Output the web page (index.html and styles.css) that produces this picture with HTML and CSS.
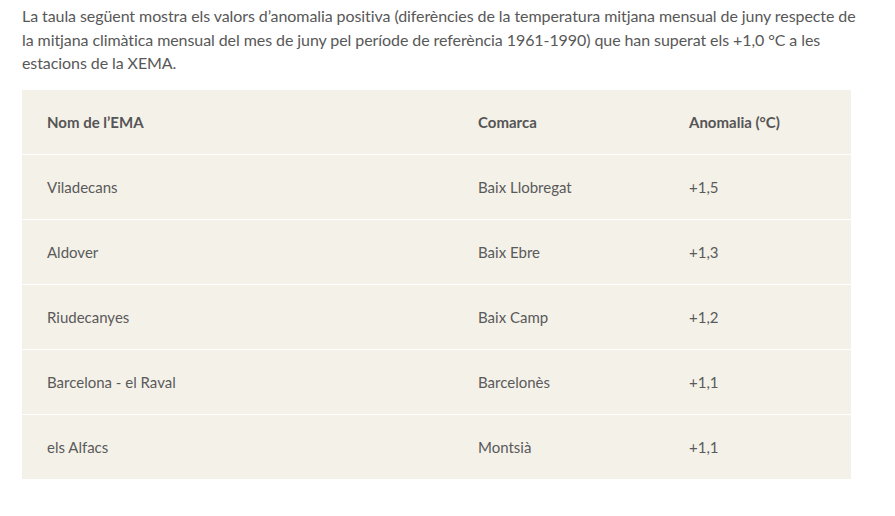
FILE: index.html
```html
<!DOCTYPE html>
<html lang="ca">
<head>
<meta charset="utf-8">
<link rel="stylesheet" href="styles.css">
</head>
<body>
<div class="content">
  <p class="intro">La taula següent mostra els valors d’anomalia positiva (diferències de la temperatura mitjana mensual de juny respecte de la mitjana climàtica mensual del mes de juny pel període de referència 1961-1990) que han superat els +1,0 °C a les estacions de la XEMA.</p>
  <table class="data">
    <thead>
      <tr><th class="c1">Nom de l’EMA</th><th class="c2">Comarca</th><th class="c3">Anomalia (°C)</th></tr>
    </thead>
    <tbody>
      <tr><td>Viladecans</td><td>Baix Llobregat</td><td>+1,5</td></tr>
      <tr><td>Aldover</td><td>Baix Ebre</td><td>+1,3</td></tr>
      <tr><td>Riudecanyes</td><td>Baix Camp</td><td>+1,2</td></tr>
      <tr><td>Barcelona - el Raval</td><td>Barcelonès</td><td>+1,1</td></tr>
      <tr><td>els Alfacs</td><td>Montsià</td><td>+1,1</td></tr>
    </tbody>
  </table>
</div>
</body>
</html>
```
FILE: styles.css
```css
html, body {
  margin: 0;
  padding: 0;
  background: #ffffff;
}
.content {
  padding: 0 30px 0 22px;
  font-family: Lato, "Liberation Sans", sans-serif;
  color: #585858;
}
.intro {
  width: 842px;
  margin: 4px 0 15px 0;
  font-size: 16px;
  line-height: 23.5px;
  letter-spacing: -0.08px;
}
.data {
  width: 829px;
  border-collapse: collapse;
  background: #f4f1e9;
  font-size: 15px;
}
.data th, .data td {
  text-align: left;
  padding: 0 25px;
  height: 64px;
  border-bottom: 1px solid #ffffff;
}
.data tbody tr:last-child td {
  border-bottom: none;
}
.data th {
  font-weight: 700;
  color: #555555;
}
.data td {
  font-weight: 400;
  color: #5a5a5a;
}
.c1 { width: 381px; }
.c2 { width: 161px; }
```
